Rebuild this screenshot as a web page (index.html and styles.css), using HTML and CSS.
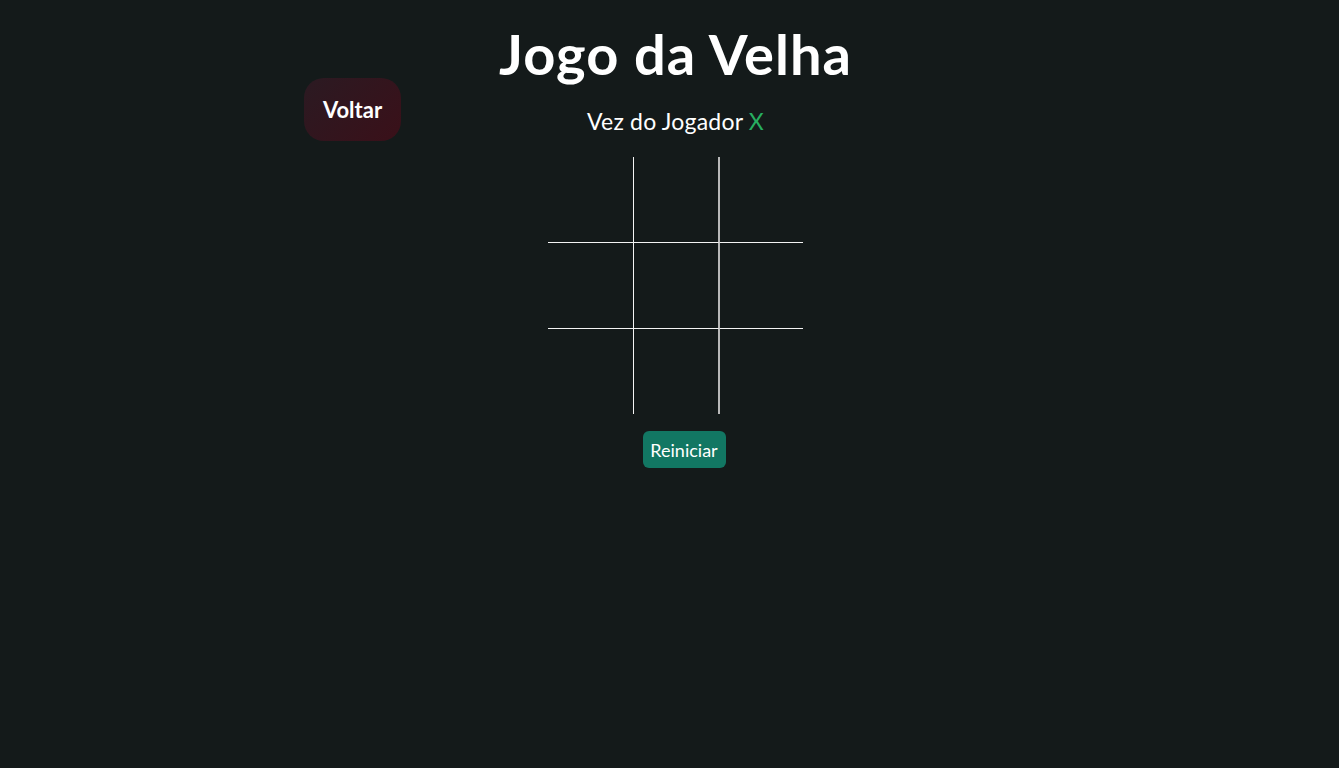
FILE: index.html
```html
<!DOCTYPE html>
<html lang="pt-BR">
<head>
<meta charset="utf-8">
<title>Jogo da Velha</title>
<link rel="stylesheet" href="styles.css">
</head>
<body>
<main class="page">
  <button class="back">Voltar</button>
  <h1 class="title">Jogo da Velha</h1>
  <p class="status">Vez do Jogador <span class="player">X</span></p>
  <div class="board">
    <div class="cell c1"></div><div class="cell c2"></div><div class="cell c3"></div>
    <div class="cell c4"></div><div class="cell c5"></div><div class="cell c6"></div>
    <div class="cell c7"></div><div class="cell c8"></div><div class="cell c9"></div>
  </div>
  <button class="reset">Reiniciar</button>
</main>
</body>
</html>
```
FILE: styles.css
```css
html, body {
  margin: 0;
  padding: 0;
  background: #141a1a;
  height: 100%;
}
body {
  font-family: "Comic Sans MS", "Lato", "DejaVu Sans", sans-serif;
  color: #ffffff;
}
.page {
  position: relative;
  display: flex;
  flex-direction: column;
  align-items: center;
  padding-left: 12px;
}
.title {
  margin: 21px 0 0;
  font-size: 56px;
  font-weight: 700;
  line-height: 66px;
  letter-spacing: 1px;
}
.status {
  margin: 19px 0 0;
  font-size: 23px;
  line-height: 30px;
  letter-spacing: 0.2px;
}
.player {
  color: #27ae60;
}
.board {
  margin-top: 21px;
  display: grid;
  grid-template-columns: 86px 86px 83px;
  grid-template-rows: 86px 86px 85px;
}
.cell {
  box-sizing: border-box;
}
.c1, .c4, .c7 { border-right: 1px solid #f4f4f4; }
.c2, .c5, .c8 { border-right: 2px solid #b8b8b8; }
.c1, .c2, .c3, .c4, .c5, .c6 { border-bottom: 1px solid #f4f4f4; }
.back {
  position: absolute;
  left: 304px;
  top: 78px;
  width: 97px;
  height: 63px;
  border: none;
  border-radius: 20px;
  background: linear-gradient(135deg, #2b1a22 0%, #3a1019 100%);
  color: #ffffff;
  font-family: inherit;
  font-size: 22px;
  font-weight: 700;
  cursor: pointer;
}
.reset {
  margin-top: 17px;
  margin-left: 17px;
  width: 83px;
  height: 37px;
  border: none;
  border-radius: 6px;
  background: #127763;
  color: #ffffff;
  font-family: inherit;
  font-size: 18px;
  cursor: pointer;
}
```
